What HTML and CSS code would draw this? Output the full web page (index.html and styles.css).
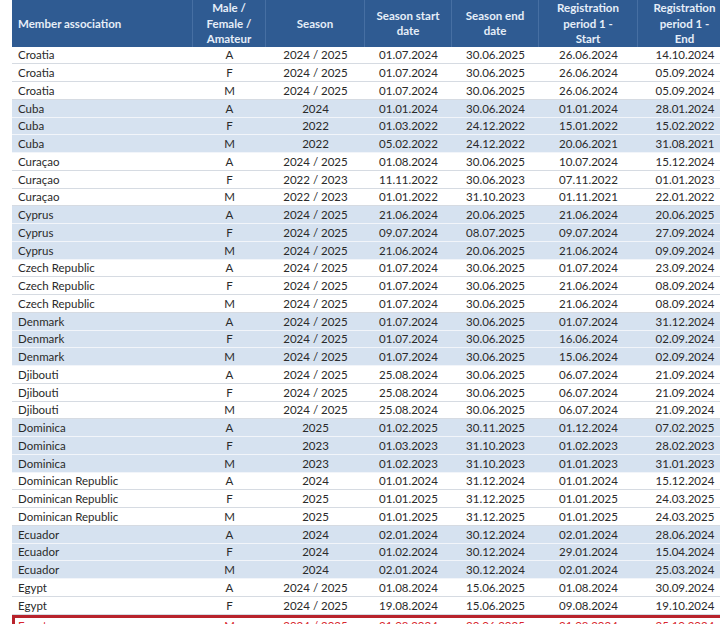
FILE: index.html
```html
<!DOCTYPE html>
<html>
<head>
<meta charset="utf-8">
<link rel="stylesheet" href="styles.css">
</head>
<body>
<table class="reg">
<colgroup>
<col class="c-name"><col class="c-sex"><col class="c-season"><col class="c-d1"><col class="c-d2"><col class="c-d3"><col class="c-d4">
</colgroup>
<thead>
<tr>
<th class="left">Member association</th>
<th>Male /<br>Female /<br>Amateur</th>
<th>Season</th>
<th>Season start<br>date</th>
<th>Season end<br>date</th>
<th>Registration<br>period 1 -<br>Start</th>
<th>Registration<br>period 1 -<br>End</th>
</tr>
</thead>
<tbody>
<tr><td>Croatia</td><td>A</td><td>2024 / 2025</td><td>01.07.2024</td><td>30.06.2025</td><td>26.06.2024</td><td>14.10.2024</td></tr>
<tr><td>Croatia</td><td>F</td><td>2024 / 2025</td><td>01.07.2024</td><td>30.06.2025</td><td>26.06.2024</td><td>05.09.2024</td></tr>
<tr><td>Croatia</td><td>M</td><td>2024 / 2025</td><td>01.07.2024</td><td>30.06.2025</td><td>26.06.2024</td><td>05.09.2024</td></tr>
<tr class="b"><td>Cuba</td><td>A</td><td>2024</td><td>01.01.2024</td><td>30.06.2024</td><td>01.01.2024</td><td>28.01.2024</td></tr>
<tr class="b"><td>Cuba</td><td>F</td><td>2022</td><td>01.03.2022</td><td>24.12.2022</td><td>15.01.2022</td><td>15.02.2022</td></tr>
<tr class="b"><td>Cuba</td><td>M</td><td>2022</td><td>05.02.2022</td><td>24.12.2022</td><td>20.06.2021</td><td>31.08.2021</td></tr>
<tr><td>Curaçao</td><td>A</td><td>2024 / 2025</td><td>01.08.2024</td><td>30.06.2025</td><td>10.07.2024</td><td>15.12.2024</td></tr>
<tr><td>Curaçao</td><td>F</td><td>2022 / 2023</td><td>11.11.2022</td><td>30.06.2023</td><td>07.11.2022</td><td>01.01.2023</td></tr>
<tr><td>Curaçao</td><td>M</td><td>2022 / 2023</td><td>01.01.2022</td><td>31.10.2023</td><td>01.11.2021</td><td>22.01.2022</td></tr>
<tr class="b"><td>Cyprus</td><td>A</td><td>2024 / 2025</td><td>21.06.2024</td><td>20.06.2025</td><td>21.06.2024</td><td>20.06.2025</td></tr>
<tr class="b"><td>Cyprus</td><td>F</td><td>2024 / 2025</td><td>09.07.2024</td><td>08.07.2025</td><td>09.07.2024</td><td>27.09.2024</td></tr>
<tr class="b"><td>Cyprus</td><td>M</td><td>2024 / 2025</td><td>21.06.2024</td><td>20.06.2025</td><td>21.06.2024</td><td>09.09.2024</td></tr>
<tr><td>Czech Republic</td><td>A</td><td>2024 / 2025</td><td>01.07.2024</td><td>30.06.2025</td><td>01.07.2024</td><td>23.09.2024</td></tr>
<tr><td>Czech Republic</td><td>F</td><td>2024 / 2025</td><td>01.07.2024</td><td>30.06.2025</td><td>21.06.2024</td><td>08.09.2024</td></tr>
<tr><td>Czech Republic</td><td>M</td><td>2024 / 2025</td><td>01.07.2024</td><td>30.06.2025</td><td>21.06.2024</td><td>08.09.2024</td></tr>
<tr class="b"><td>Denmark</td><td>A</td><td>2024 / 2025</td><td>01.07.2024</td><td>30.06.2025</td><td>01.07.2024</td><td>31.12.2024</td></tr>
<tr class="b"><td>Denmark</td><td>F</td><td>2024 / 2025</td><td>01.07.2024</td><td>30.06.2025</td><td>16.06.2024</td><td>02.09.2024</td></tr>
<tr class="b"><td>Denmark</td><td>M</td><td>2024 / 2025</td><td>01.07.2024</td><td>30.06.2025</td><td>15.06.2024</td><td>02.09.2024</td></tr>
<tr><td>Djibouti</td><td>A</td><td>2024 / 2025</td><td>25.08.2024</td><td>30.06.2025</td><td>06.07.2024</td><td>21.09.2024</td></tr>
<tr><td>Djibouti</td><td>F</td><td>2024 / 2025</td><td>25.08.2024</td><td>30.06.2025</td><td>06.07.2024</td><td>21.09.2024</td></tr>
<tr><td>Djibouti</td><td>M</td><td>2024 / 2025</td><td>25.08.2024</td><td>30.06.2025</td><td>06.07.2024</td><td>21.09.2024</td></tr>
<tr class="b"><td>Dominica</td><td>A</td><td>2025</td><td>01.02.2025</td><td>30.11.2025</td><td>01.12.2024</td><td>07.02.2025</td></tr>
<tr class="b"><td>Dominica</td><td>F</td><td>2023</td><td>01.03.2023</td><td>31.10.2023</td><td>01.02.2023</td><td>28.02.2023</td></tr>
<tr class="b"><td>Dominica</td><td>M</td><td>2023</td><td>01.02.2023</td><td>31.10.2023</td><td>01.01.2023</td><td>31.01.2023</td></tr>
<tr><td>Dominican Republic</td><td>A</td><td>2024</td><td>01.01.2024</td><td>31.12.2024</td><td>01.01.2024</td><td>15.12.2024</td></tr>
<tr><td>Dominican Republic</td><td>F</td><td>2025</td><td>01.01.2025</td><td>31.12.2025</td><td>01.01.2025</td><td>24.03.2025</td></tr>
<tr><td>Dominican Republic</td><td>M</td><td>2025</td><td>01.01.2025</td><td>31.12.2025</td><td>01.01.2025</td><td>24.03.2025</td></tr>
<tr class="b"><td>Ecuador</td><td>A</td><td>2024</td><td>02.01.2024</td><td>30.12.2024</td><td>02.01.2024</td><td>28.06.2024</td></tr>
<tr class="b"><td>Ecuador</td><td>F</td><td>2024</td><td>01.02.2024</td><td>30.12.2024</td><td>29.01.2024</td><td>15.04.2024</td></tr>
<tr class="b"><td>Ecuador</td><td>M</td><td>2024</td><td>02.01.2024</td><td>30.12.2024</td><td>02.01.2024</td><td>25.03.2024</td></tr>
<tr><td>Egypt</td><td>A</td><td>2024 / 2025</td><td>01.08.2024</td><td>15.06.2025</td><td>01.08.2024</td><td>30.09.2024</td></tr>
<tr><td>Egypt</td><td>F</td><td>2024 / 2025</td><td>19.08.2024</td><td>15.06.2025</td><td>09.08.2024</td><td>19.10.2024</td></tr>
<tr class="hl"><td>Egypt</td><td>M</td><td>2024 / 2025</td><td>31.08.2024</td><td>30.06.2025</td><td>31.08.2024</td><td>25.10.2024</td></tr>
</tbody>
</table>
</body>
</html>
```
FILE: styles.css
```css
html, body {
  margin: 0;
  padding: 0;
  overflow: hidden;
  background: #ffffff;
}
body {
  padding-left: 12px;
  font-family: Lato, "Open Sans", sans-serif;
}
.reg {
  border-collapse: separate;
  border-spacing: 0;
  table-layout: fixed;
  width: 720px;
  font-size: 11.5px;
  color: #2a2a2a;
}
.c-name { width: 181px; }
.c-sex { width: 73px; }
.c-season { width: 99px; }
.c-d1 { width: 87px; }
.c-d2 { width: 87px; }
.c-d3 { width: 99px; }
.c-d4 { width: 94px; }

.reg thead th {
  height: 46px;
  padding: 0;
  background: #2f5b92;
  color: #e6eef8;
  font-weight: 700;
  font-size: 11.5px;
  line-height: 15.5px;
  text-align: center;
  vertical-align: middle;
  border-right: 1px solid #466fa3;
  box-sizing: border-box;
}
.reg thead th.left {
  text-align: left;
  padding-left: 6px;
}
.reg tbody tr {
  height: 17.75px;
}
.reg tbody td {
  padding: 0;
  line-height: 15px;
  text-align: center;
  white-space: nowrap;
  border-bottom: 1px solid #d6dbe2;
  box-sizing: border-box;
}
.reg tbody td:first-child {
  text-align: left;
  padding-left: 6px;
}
.reg tbody tr.b td {
  background: #d6e2f0;
  border-bottom-color: #f2f5fa;
}
.reg tbody tr.hl td {
  color: #d8262e;
  border-top: 3px solid #b8232c;
  vertical-align: top;
}
.reg tbody tr.hl td:first-child {
  border-left: 3px solid #b8232c;
  padding-left: 3px;
}
```
